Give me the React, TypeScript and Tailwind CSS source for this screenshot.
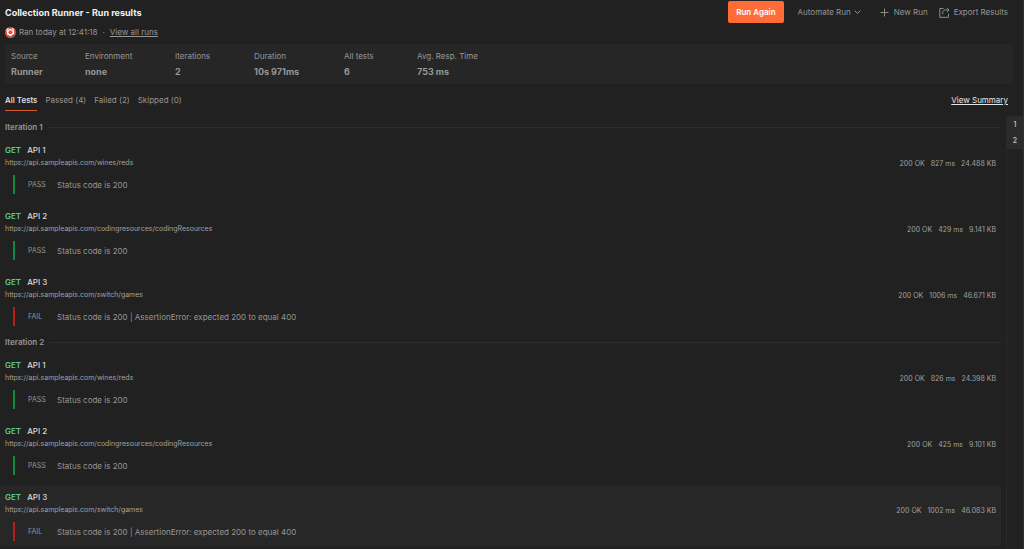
type Test = {
  name: string;
  url: string;
  time: string;
  size: string;
  pass: boolean;
  active?: boolean;
};

const summary = [
  { label: "Source", value: "Runner", width: "w-[74px]" },
  { label: "Environment", value: "none", width: "w-[90px]" },
  { label: "Iterations", value: "2", width: "w-[79px]" },
  { label: "Duration", value: "10s 971ms", width: "w-[90px]" },
  { label: "All tests", value: "6", width: "w-[73px]" },
  { label: "Avg. Resp. Time", value: "753 ms", width: "w-[90px]" },
];

const WINES = "https://api.sampleapis.com/wines/reds";
const CODING = "https://api.sampleapis.com/codingresources/codingResources";
const GAMES = "https://api.sampleapis.com/switch/games";

const iterations: Test[][] = [
  [
    { name: "API 1", url: WINES, time: "827 ms", size: "24.488 KB", pass: true },
    { name: "API 2", url: CODING, time: "429 ms", size: "9.141 KB", pass: true },
    { name: "API 3", url: GAMES, time: "1006 ms", size: "46.671 KB", pass: false },
  ],
  [
    { name: "API 1", url: WINES, time: "826 ms", size: "24.398 KB", pass: true },
    { name: "API 2", url: CODING, time: "425 ms", size: "9.101 KB", pass: true },
    { name: "API 3", url: GAMES, time: "1002 ms", size: "46.083 KB", pass: false, active: true },
  ],
];

const tabs = ["All Tests", "Passed (4)", "Failed (2)", "Skipped (0)"];

function Avatar() {
  return (
    <svg className="size-[11px] shrink-0" viewBox="0 0 22 22" aria-hidden="true">
      <circle cx="11" cy="11" r="11" fill="#e8513d" />
      <path d="M1.5 6.5A11 11 0 0 1 6 1.5L8 4 3.5 8.5z" fill="#f9c0b4" />
      <path d="M14 1.2a11 11 0 0 1 5.5 3.6L17 7l-3-2.5z" fill="#f9c0b4" />
      <path d="M11 3.5 18 7.5v6.5l-7 4.5-7-4.500V7.500z" fill="#fff" />
      <ellipse cx="11" cy="10.500" rx="4.200" ry="3.800" fill="#e8513d" />
      <path d="M13.500 17.500 20.500 13.500a10.500 10.500 0 0 1-7 8z" fill="#4b6670" />
    </svg>
  );
}

function ChevronIcon() {
  return (
    <svg className="h-[6px] w-[7px]" viewBox="0 0 7 6" fill="none" stroke="currentColor" aria-hidden="true">
      <path d="M.7 1.6 3.5 4.4 6.3 1.6" />
    </svg>
  );
}

function PlusIcon() {
  return (
    <svg className="size-[9px]" viewBox="0 0 9 9" fill="none" stroke="currentColor" strokeWidth=".9" aria-hidden="true">
      <path d="M4.5.5v8M.5 4.5h8" />
    </svg>
  );
}

function ExportIcon() {
  return (
    <svg className="size-[11px]" viewBox="0 0 11 11" fill="none" stroke="currentColor" strokeWidth=".9" aria-hidden="true">
      <path d="M4.500 1.500H.8v8.800h8.700V6.500" />
      <path d="M3.700 7.300V5.600c0-1.600.9-2.600 2.500-2.600h3.600M7.900.9 10 3 7.900 5.100" />
    </svg>
  );
}

function TestRow({ test }: { test: Test }) {
  return (
    <li
      className={`flex h-[61px] items-start justify-between rounded-sm pr-[5px] pl-[5px] ${
        test.active ? "bg-[#272727]" : ""
      }`}
    >
      <div className="pt-[6px]">
        <h3 className="flex gap-[6px] text-[8px] leading-3 font-medium text-[#d8d8d8]">
          <span className="font-semibold text-[#5fc68b]">GET</span>
          {test.name}
        </h3>
        <p className="mt-px text-[7px] leading-3 text-[#a0a0a0]">{test.url}</p>
        <div
          className={`mt-[6px] ml-2 flex h-[19px] items-center border-l-2 pl-[13px] text-[8px] text-[#969696] ${
            test.pass ? "border-[#0f8a3e]" : "border-[#b3201a]"
          }`}
        >
          <span className="w-[29px] text-[7px]">{test.pass ? "PASS" : "FAIL"}</span>
          <span>{test.pass ? "Status code is 200" : "Status code is 200 | AssertionError: expected 200 to equal 400"}</span>
        </div>
      </div>
      <div className="flex gap-[6px] pt-5 text-[7px] leading-3 text-[#a0a0a0]">
        <span>200 OK</span>
        <span>{test.time}</span>
        <span>{test.size}</span>
      </div>
    </li>
  );
}

export default function App() {
  return (
    <div className="flex min-h-screen flex-col border-r border-[#303030] bg-[#212121] font-['Inter',sans-serif] text-[8px] leading-3 text-[#969696]">
      <header className="flex items-start justify-between pr-[15px] pl-[5px]">
        <div className="pt-[7px]">
          <h1 className="text-[9px] leading-3 font-bold text-[#f2f2f2]">Collection Runner - Run results</h1>
          <div className="mt-[7px] flex items-center">
            <Avatar />
            <span className="ml-[3px]">Ran today at 12:41:18</span>
            <span className="mx-[5px]">·</span>
            <a href="#runs" className="underline">View all runs</a>
          </div>
        </div>
        <div className="flex items-center pt-px">
          <button className="h-[22px] rounded-[2px] bg-[#ff6c37] px-2 font-semibold text-white">Run Again</button>
          <button className="ml-[14px] flex items-center gap-[3px]">
            Automate Run
            <ChevronIcon />
          </button>
          <button className="ml-[19px] flex items-center gap-[5px]">
            <PlusIcon />
            New Run
          </button>
          <button className="ml-[11px] flex items-center gap-1">
            <ExportIcon />
            Export Results
          </button>
        </div>
      </header>

      <dl className="mt-[6px] mr-[10px] ml-[5px] flex h-10 bg-[#262626] pt-[6px] pl-[6px]">
        {summary.map((item) => (
          <div key={item.label} className={item.width}>
            <dt>{item.label}</dt>
            <dd className="mt-1 text-[9px] leading-3 font-bold">{item.value}</dd>
          </div>
        ))}
      </dl>

      <nav className="mt-[10px] flex items-start justify-between pr-[15px] pl-[5px]">
        <div className="flex gap-2">
          {tabs.map((tab, i) => (
            <button
              key={tab}
              className={`h-[17px] border-b pb-1 ${
                i === 0 ? "border-[#d95b30] font-medium text-[#e6e6e6]" : "border-transparent"
              }`}
            >
              {tab}
            </button>
          ))}
        </div>
        <a href="#summary" className="text-[#e6e6e6] underline">View Summary</a>
      </nav>

      <div className="mt-[5px] flex grow">
        <main className="grow pr-[5px]">
          {iterations.map((tests, i) => (
            <section key={i}>
              <h2 className="flex h-[22px] items-center gap-[5px] pl-[5px] font-semibold">
                Iteration {i + 1}
                <span className="h-px grow bg-[#2d2d2d]" />
              </h2>
              <ul className="flex flex-col gap-[5px]">
                {tests.map((test) => (
                  <TestRow key={test.name} test={test} />
                ))}
              </ul>
            </section>
          ))}
        </main>
        <aside className="w-[17px] shrink-0 border-l border-[#292929]">
          <div className="bg-[#2b2b2b] pt-px">
            {[1, 2].map((n) => (
              <button key={n} className="flex h-4 w-full items-center justify-center text-[7px] font-medium text-[#c8c8c8]">
                {n}
              </button>
            ))}
          </div>
        </aside>
      </div>
    </div>
  );
}
